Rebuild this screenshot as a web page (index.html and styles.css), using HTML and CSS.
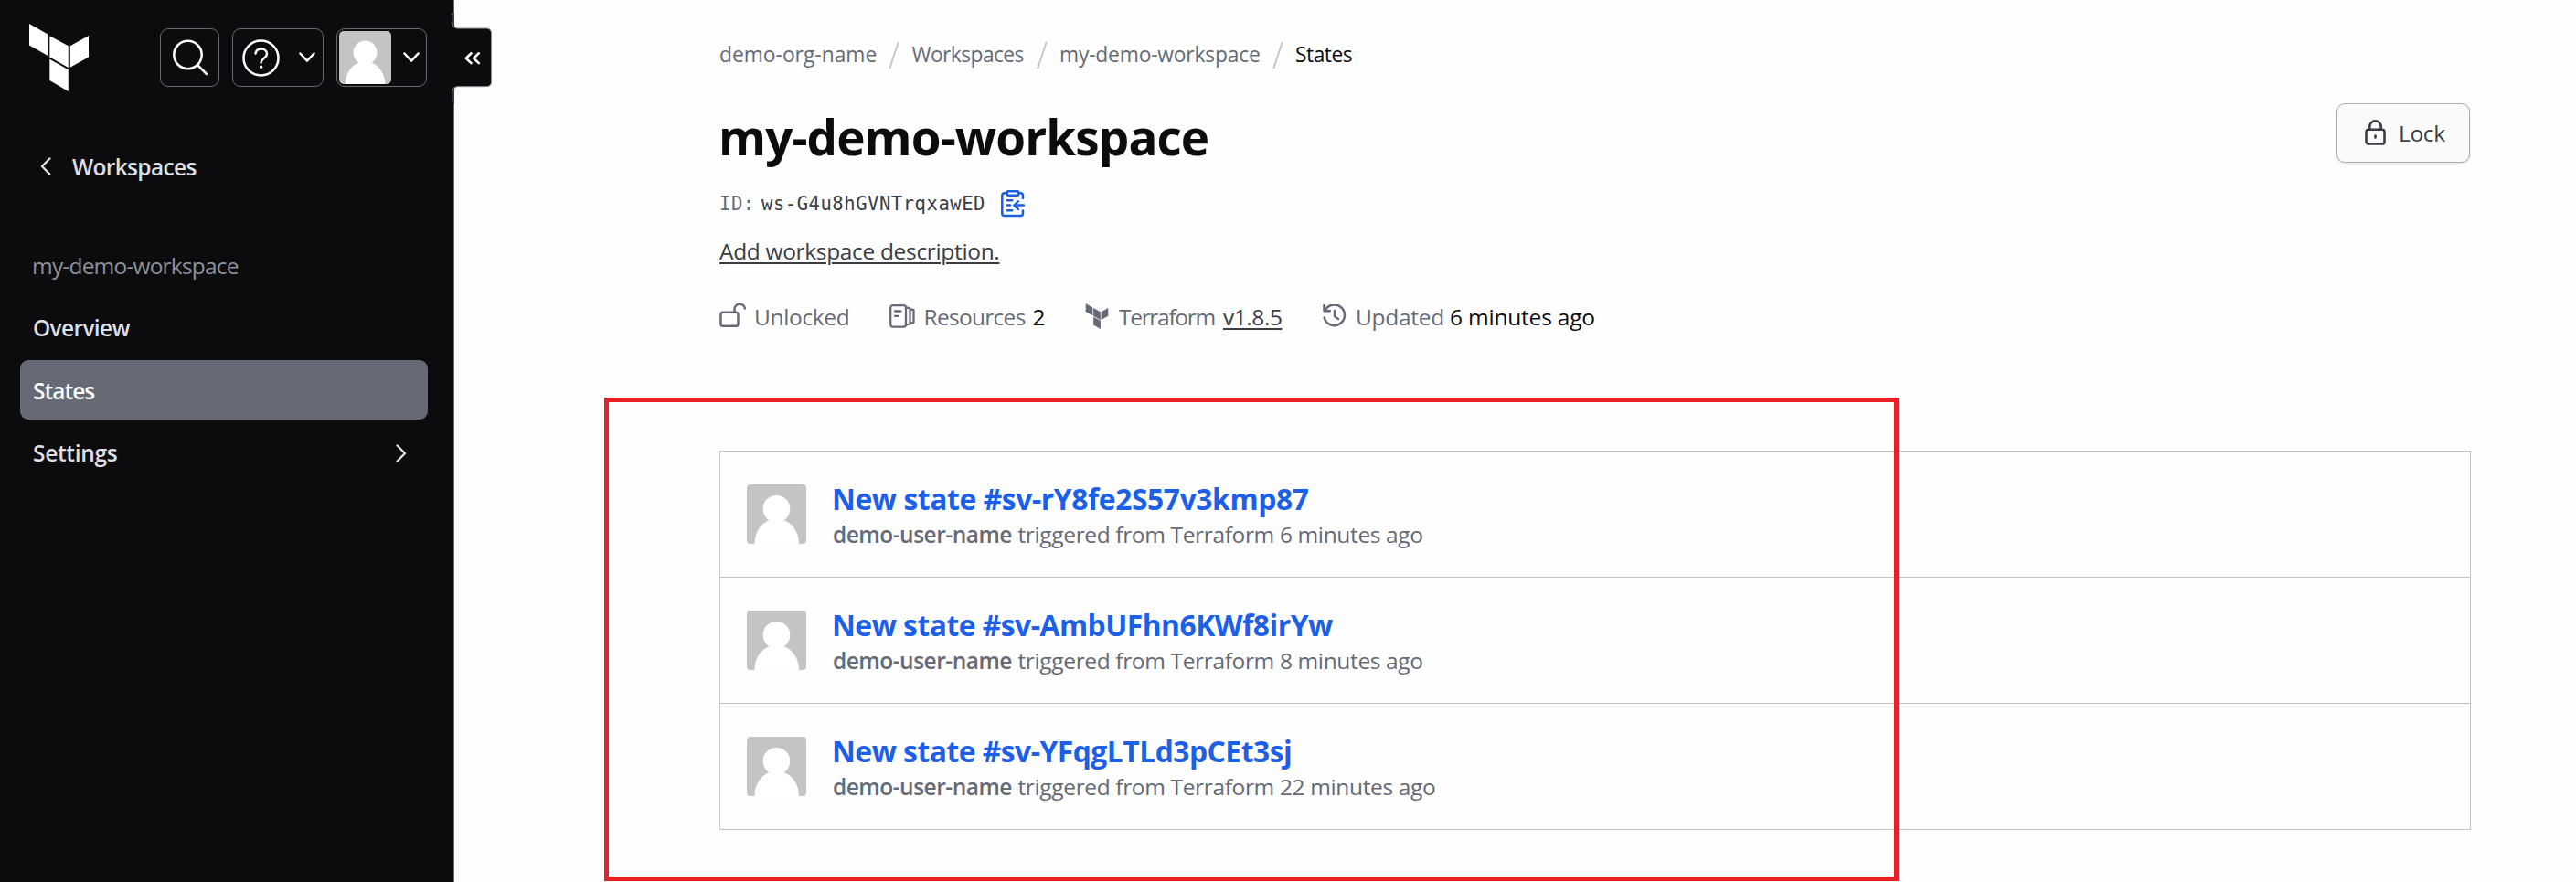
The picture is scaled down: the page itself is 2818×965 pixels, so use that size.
FILE: index.html
```
<!DOCTYPE html>
<html lang="en">
<head>
<meta charset="utf-8">
<title>my-demo-workspace | States</title>
<link rel="stylesheet" href="styles.css">
</head>
<body>
<svg class="defs" width="0" height="0">
  <symbol id="terraform" viewBox="0 0 64.6 73.5">
    <path d="M0 0l20.2 11.5v23.2L0 23.3zM22.2 13.2l20.3 11v23.5L22.2 36.3zM44.5 24.2l20.1-11.2v23.3l-20.1 11.2zM22.2 38.5l20.3 11.5v23.5L22.2 61.7z"/>
  </symbol>
  <symbol id="person" viewBox="0 0 65 65">
    <rect width="65" height="65" rx="4" fill="#c4c4c4"/>
    <path fill="#fff" d="M32.5 12c8.4 0 14.8 6.3 14.8 14.5 0 5.8-3 10.5-6.8 12.8C50 42.5 57 52 57 65H8.5C8.5 52 15.5 42.5 24.5 39.3 20.7 37 17.7 32.3 17.7 26.5 17.7 18.3 24.1 12 32.5 12z"/>
  </symbol>
</svg>

<aside class="sidebar">
  <header class="side-top">
    <svg class="logo" width="65" height="74"><use href="#terraform"/></svg>
    <div class="tools">
      <button class="tool search" aria-label="Search">
        <svg width="40" height="42" viewBox="0 0 40 42" fill="none" stroke="#fff" stroke-width="2.5" stroke-linecap="round"><circle cx="17.5" cy="18" r="15.2"/><path d="M28.5 29.5l9.5 9.5"/></svg>
      </button>
      <button class="tool help" aria-label="Help">
        <svg width="41" height="41" viewBox="0 0 41 41" fill="none" stroke="#fff" stroke-width="2.5" stroke-linecap="round" stroke-linejoin="round"><circle cx="20.5" cy="20.5" r="19"/><path d="M14.5 15.5c.6-3.3 3-5 6.1-5 3.6 0 6.4 2.2 6.4 5.5 0 4.6-6.4 5.1-6.4 9.5"/><circle cx="20.6" cy="30.3" r="1.1" fill="#fff" stroke-width="1.4"/></svg>
        <svg width="18" height="12" viewBox="0 0 18 12" fill="none" stroke="#fff" stroke-width="2.5" stroke-linecap="round" stroke-linejoin="round"><path d="M1.5 1.5L9 9.7l7.5-8.2"/></svg>
      </button>
      <button class="tool account" aria-label="Account">
        <svg width="57" height="58" viewBox="0 0 57 58"><rect width="57" height="58" rx="5" fill="#c4c4c4"/><path fill="#fff" d="M28.5 10.5c7.3 0 12.9 5.7 12.9 13 0 4.7-2.2 8.8-5.7 11.2C44 37.5 50 47 50.3 58H6.7C7 47 13 37.5 21.3 34.7c-3.5-2.4-5.7-6.5-5.7-11.2 0-7.3 5.6-13 12.9-13z"/></svg>
        <svg width="18" height="12" viewBox="0 0 18 12" fill="none" stroke="#fff" stroke-width="2.5" stroke-linecap="round" stroke-linejoin="round"><path d="M1.5 1.5L9 9.7l7.5-8.2"/></svg>
      </button>
    </div>
  </header>
  <a class="back">
    <svg width="12" height="20" viewBox="0 0 12 20" fill="none" stroke="#dedfe3" stroke-width="2.5" stroke-linecap="round" stroke-linejoin="round"><path d="M10.3 1.5L2 10l8.3 8.5"/></svg>
    <span>Workspaces</span>
  </a>
  <div class="side-label">my-demo-workspace</div>
  <nav class="side-nav">
    <a class="nav-item overview">Overview</a>
    <a class="nav-item states active">States</a>
    <a class="nav-item settings">Settings
      <svg width="12" height="20" viewBox="0 0 12 20" fill="none" stroke="#dedfe3" stroke-width="2.5" stroke-linecap="round" stroke-linejoin="round"><path d="M1.7 1.5L10 10l-8.3 8.5"/></svg>
    </a>
  </nav>
</aside>

<svg class="collapse" width="46" height="100" viewBox="0 0 46 100">
  <path fill="#0c0c0e" d="M0 0h2.5v12q0 5 5 5H38q5.5 0 5.5 5.5v52.7q0 5.5-5.5 5.5H7.5q-5 0-5 5v14.3H0z"/>
  <path fill="none" stroke="#8c909c" stroke-width="1" d="M.8 0v11q0 5.5 5.5 6H38q5.5 0 5.5 5.5v52.7q0 5.5-5.5 5.5H6.3q-5.5.5-5.5 6V98"/>
  <path fill="none" stroke="#fff" stroke-width="2.6" stroke-linecap="round" stroke-linejoin="round" d="M21.5 44.3l-5.7 5.4 5.7 5.4M29.8 44.3l-5.7 5.4 5.7 5.4"/>
</svg>

<main class="main">
  <nav class="crumbs">
    <a class="c1">demo-org-name</a><i></i><a class="c2">Workspaces</a><i></i><a class="c3">my-demo-workspace</a><i></i><span class="c4">States</span>
  </nav>
  <header class="head">
    <div class="head-text">
      <h1>my-demo-workspace</h1>
      <div class="id-row">
        <span class="id-key">ID:</span><span class="id-val">ws-G4u8hGVNTrqxawED</span>
        <svg width="26" height="30" viewBox="0 0 26 30" fill="none" stroke="#1c5fe0" stroke-width="2.5" stroke-linecap="round" stroke-linejoin="round"><path d="M6.5 3.3H4Q1.3 3.3 1.3 6v19.5q0 2.6 2.7 2.6h17.5q2.5 0 2.5-2.5V22.5M19.5 3.3H21.5q2.5 0 2.5 2.7v3"/><rect x="6.7" y="1.2" width="12.6" height="4.5" rx="1.5"/><path d="M6.7 11.2h5.5M6.7 16.6h3.5M6.7 22.3h5.5M25 16.6H14.5M18.8 12.3l-4.4 4.3 4.4 4.3"/></svg>
      </div>
      <a class="desc">Add workspace description.</a>
    </div>
    <button class="lock">
      <svg width="23" height="28" viewBox="0 0 23 28" fill="none" stroke="#3b3d45" stroke-width="2.6" stroke-linecap="round" stroke-linejoin="round"><rect x="1.5" y="10.8" width="20" height="15.7" rx="2.6"/><path d="M5.3 10.5V7.5a6.2 6.2 0 0 1 12.4 0v3M11.5 17.5v2"/></svg>
      <span>Lock</span>
    </button>
  </header>
  <ul class="meta">
    <li class="m-lock">
      <svg width="30" height="28" viewBox="0 0 30 28" fill="none" stroke="#656a76" stroke-width="2.5" stroke-linecap="round" stroke-linejoin="round"><rect x="1.5" y="10.7" width="19" height="15" rx="2.3"/><path d="M16.5 10.5V7.2a5.8 5.9 0 0 1 11.5-.7"/></svg>
      <span>Unlocked</span>
    </li>
    <li class="m-res">
      <svg width="28" height="26" viewBox="0 0 28 26" fill="none" stroke="#656a76" stroke-width="2.3" stroke-linecap="round" stroke-linejoin="round"><rect x="1.2" y="1.2" width="16.8" height="23.4" rx="2.5"/><path d="M6 7.5h6.5M6 12.8h4M18.5 3.3l4 1v17.2l-4 1M22.7 5.2l3.8 1v13.6l-3.8 1"/></svg>
      <span>Resources</span><b>2</b>
    </li>
    <li class="m-tf">
      <svg class="tf" width="26" height="28"><use href="#terraform"/></svg>
      <span>Terraform</span><a>v1.8.5</a>
    </li>
    <li class="m-upd">
      <svg width="26" height="26" viewBox="0 0 26 26" fill="none" stroke="#656a76" stroke-width="2.5" stroke-linecap="round" stroke-linejoin="round"><path d="M1.5 1v6.3h6.3M2.3 7.3A11.3 11.3 0 1 1 1.7 14.5M13 7v6.3l4 2.7"/></svg>
      <span>Updated</span><b>6 minutes ago</b>
    </li>
  </ul>
  <ul class="list">
    <li>
      <svg width="65" height="65"><use href="#person"/></svg>
      <div class="entry"><a class="t1">New state #sv-rY8fe2S57v3kmp87</a><p><strong>demo-user-name</strong><span>triggered from Terraform 6 minutes ago</span></p></div>
    </li>
    <li>
      <svg width="65" height="65"><use href="#person"/></svg>
      <div class="entry"><a class="t2">New state #sv-AmbUFhn6KWf8irYw</a><p><strong>demo-user-name</strong><span>triggered from Terraform 8 minutes ago</span></p></div>
    </li>
    <li>
      <svg width="65" height="65"><use href="#person"/></svg>
      <div class="entry"><a class="t3">New state #sv-YFqgLTLd3pCEt3sj</a><p><strong>demo-user-name</strong><span>triggered from Terraform 22 minutes ago</span></p></div>
    </li>
  </ul>
</main>
<div class="highlight"></div>
</body>
</html>
```
FILE: styles.css
```
* { box-sizing: border-box; }
body {
  margin: 0;
  height: 965px;
  overflow: hidden;
  position: relative;
  display: flex;
  background: #fefefe;
  color: #0c0c0e;
  font: 24.5px/34px "Open Sans", "Noto Sans", sans-serif;
  white-space: nowrap;
}
ul, h1, p { margin: 0; padding: 0; list-style: none; }
button { font: inherit; padding: 0; margin: 0; }
svg { display: block; flex: none; }
.defs { position: absolute; }

/* Sidebar */
.sidebar {
  width: 497px;
  height: 965px;
  flex: none;
  background: #0c0c0e;
  border-right: 1px solid #656a76;
  color: #dedfe3;
  font-weight: 600;
}
.side-top { display: flex; justify-content: space-between; padding: 26px 29px 0 32px; }
.logo { fill: #fff; }
.tools { display: flex; gap: 14px; padding-top: 5px; }
.tool {
  height: 64px;
  display: flex;
  align-items: center;
  background: #0c0c0e;
  border: 1px solid #656a76;
  border-radius: 9px;
}
.search { width: 65px; padding: 0 0 0 12px; }
.help { width: 100px; justify-content: space-between; padding: 0 8px 0 10px; }
.account { width: 99px; justify-content: space-between; padding: 0 7px 0 2px; }
.back { display: flex; align-items: center; gap: 23px; height: 34px; margin: 65px 0 0 44px; letter-spacing: -.66px; }
.back span { padding-top: 1px; }
.side-label { margin: 75px 0 0 35px; color: #8c909c; font-weight: 500; letter-spacing: -.8px; }
.side-nav { display: flex; flex-direction: column; gap: 4px; margin: 17px 28px 0 22px; }
.nav-item {
  display: flex;
  align-items: center;
  justify-content: space-between;
  height: 65px;
  padding: 2px 23px 0 14px;
  border-radius: 9px;
}
.overview { letter-spacing: -.67px; }
.states { letter-spacing: -.98px; }
.settings { letter-spacing: -.31px; padding-top: 0; }
.active { background: #656a76; color: #fff; }
.collapse { position: absolute; left: 494px; top: 14px; }

/* Main column */
.main { flex: 1; padding: 42px 115px 0 290px; }
.crumbs { display: flex; height: 36px; font-size: 22.8px; line-height: 36px; color: #656a76; }
.crumbs i { width: 1.5px; height: 29px; margin: 4px 19px 0 18.5px; background: #c2c5cb; transform: skewX(-18deg); }
.c1 { width: 171.5px; }
.c2 { width: 122.5px; letter-spacing: -.58px; }
.c3 { width: 219px; letter-spacing: -.18px; }
.c4 { color: #0c0c0e; letter-spacing: -.5px; }

.head { display: flex; justify-content: space-between; align-items: flex-start; margin-top: 35px; }
.head-text { padding-top: 5px; }
h1 { font-size: 53px; line-height: 64px; font-weight: 700; letter-spacing: -.9px; margin-left: -1px; }
.id-row {
  display: flex;
  align-items: center;
  height: 32px;
  margin-top: 25px;
  font: 20.5px/32px "DejaVu Sans Mono", monospace;
  letter-spacing: .55px;
}
.id-key { width: 46px; color: #656a76; }
.id-val { width: 262px; color: #3b3d45; }
.desc {
  display: block;
  margin-top: 19px;
  color: #3b3d45;
  letter-spacing: -.33px;
  text-decoration: underline;
  text-decoration-thickness: 2px;
  text-underline-offset: 3px;
}
.lock {
  display: flex;
  align-items: center;
  gap: 14px;
  width: 146px;
  height: 65px;
  margin-right: 1px;
  padding: 0 0 2px 30px;
  background: #fafafa;
  border: 1px solid #a9abb2;
  border-radius: 9px;
  box-shadow: 0 2px 3px rgba(101, 106, 118, .15);
  color: #3b3d45;
  letter-spacing: -.35px;
}
.lock span { padding-top: 3px; }

.meta { display: flex; margin-top: 38px; height: 34px; color: #656a76; }
.meta li { display: flex; }
.meta b { font-weight: 400; color: #0c0c0e; }
.m-lock { width: 186px; letter-spacing: -.35px; gap: 8px; }
.m-lock svg { margin-top: 1px; }
.m-res { width: 214px; letter-spacing: -.71px; }
.m-res svg { margin: 3px 9.5px 0 0; }
.m-res span { width: 119px; }
.m-tf { width: 260px; letter-spacing: -1.3px; }
.m-tf span { width: 114px; }
.m-tf svg { margin: 2px 11px 0 0; fill: #656a76; }
.m-tf a {
  color: #3b3d45;
  letter-spacing: -.45px;
  text-decoration: underline;
  text-decoration-thickness: 2px;
  text-underline-offset: 3px;
}
.m-upd { letter-spacing: -.29px; }
.m-upd svg { margin: 3px 10px 0 0; }
.m-upd span { width: 103px; }
.m-upd b { letter-spacing: -.2px; }

.list { margin-top: 129px; border: 1px solid #c2c2c5; }
.list li { display: flex; gap: 28px; height: 137px; padding: 36px 0 0 29px; }
.list li + li { border-top: 1px solid #c2c2c5; height: 138px; }
.entry { margin-top: -4px; }
.entry a { display: block; font-size: 31.8px; line-height: 40px; font-weight: 700; color: #1c5fe8; letter-spacing: -.41px; }
.entry .t2, .entry .t3 { letter-spacing: -.5px; }
.entry p { display: flex; line-height: 38px; color: #656a76; letter-spacing: -.36px; }
.entry strong { width: 203.5px; padding-left: 1px; font-weight: 600; letter-spacing: -.5px; }

/* Annotation frame */
.highlight { position: absolute; left: 661px; top: 435px; width: 1416px; height: 529px; border: 5px solid #e81f27; }
```
